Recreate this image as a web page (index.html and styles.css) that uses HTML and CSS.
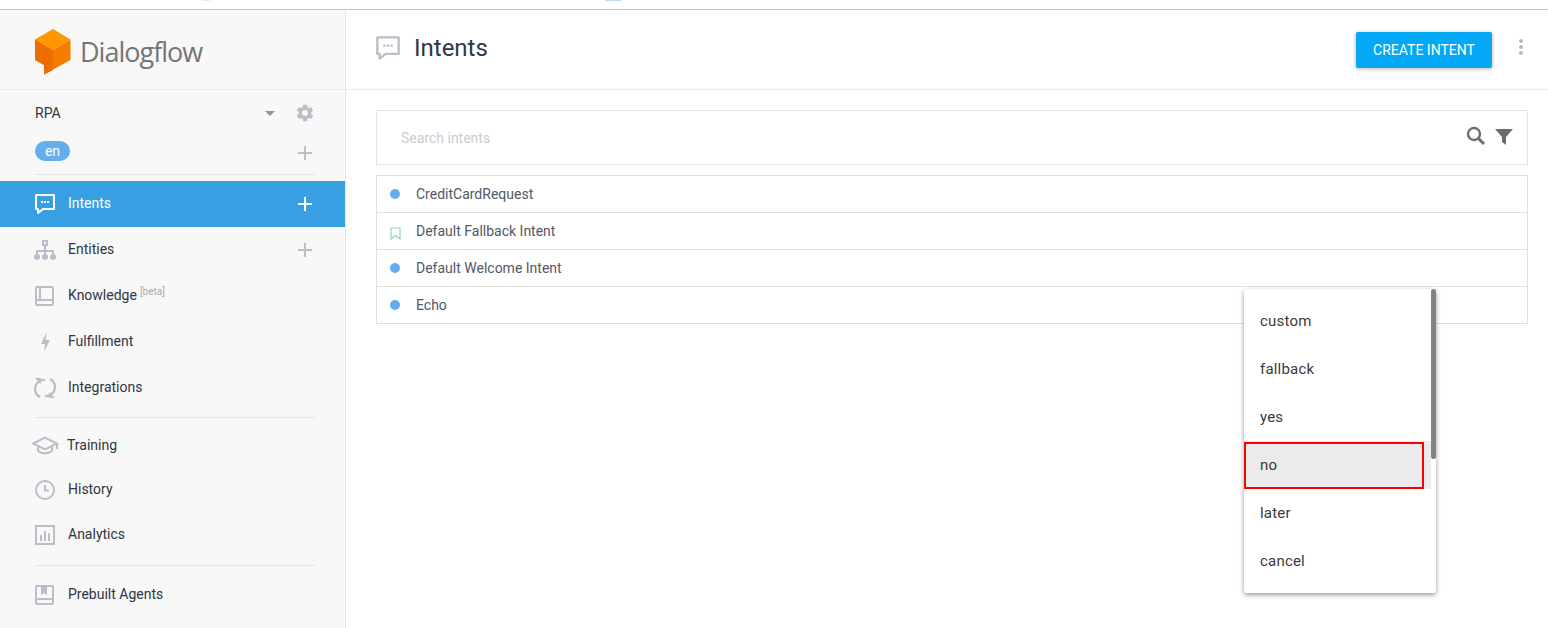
FILE: index.html
```html
<!DOCTYPE html>
<html lang="en">
<head>
<meta charset="utf-8">
<title>Dialogflow - Intents</title>
<link rel="stylesheet" href="styles.css">
</head>
<body>
<div class="topstrip"><span class="frag frag-a"></span><span class="frag frag-b"></span></div>
<div class="app">
  <aside class="sidebar">
    <div class="logo-row">
      <svg class="logo" width="36" height="46" viewBox="0 0 36 46">
        <path fill="#f57c00" d="M0 10.500 18 21 35.500 10.500V31L9 45.500V36L0 31z"/>
        <path fill="#ef6c00" d="M0 10.500 18 21V41L9 45.500V36L0 31z"/>
        <path fill="#ff9800" d="M18 0 35.500 10.500 18 21 0 10.500z"/>
      </svg>
      <span class="logo-text">Dialogflow</span>
    </div>
    <div class="agent-row">
      <span class="agent-name">RPA</span>
      <span class="caret"></span>
      <svg class="gear" width="20" height="20" viewBox="0 0 24 24"><path fill="#b9bec9" d="M19.400 13c.04-.33.060-.66.060-1s-.02-.67-.06-1l2.100-1.650a.5.500 0 0 0 .12-.64l-2-3.460a.5.500 0 0 0-.61-.22l-2.490 1a7.300 7.300 0 0 0-1.690-.98l-.38-2.650A.49.490 0 0 0 14 2h-4a.49.490 0 0 0-.49.42l-.38 2.650c-.61.25-1.170.59-1.690.98l-2.490-1a.5.500 0 0 0-.61.22l-2 3.460a.49.490 0 0 0 .12.64L4.570 11c-.04.33-.07.66-.07 1s.03.67.07 1l-2.110 1.650a.5.500 0 0 0-.12.64l2 3.460c.12.22.39.3.61.22l2.490-1c.52.4 1.080.73 1.690.98l.38 2.650c.03.24.24.42.49.42h4c.25 0 .46-.18.49-.42l.38-2.650c.61-.25 1.170-.59 1.690-.98l2.490 1c.22.08.49 0 .61-.22l2-3.460a.5.500 0 0 0-.12-.64zM12 15.500a3.500 3.500 0 1 1 0-7 3.500 3.500 0 0 1 0 7z"/></svg>
    </div>
    <div class="lang-row">
      <span class="lang-pill">en</span>
      <svg class="plus" width="14" height="14" viewBox="0 0 14 14"><path fill="#b9bec9" d="M6 0h2v6h6v2H8v6H6V8H0V6h6z"/></svg>
    </div>
    <div class="rule rule-lang"></div>
    <nav class="nav">
      <a class="nav-item active">
        <svg class="nav-icon" width="22" height="22" viewBox="0 0 22 22"><path fill="none" stroke="#fff" stroke-width="2" stroke-linejoin="round" d="M2 2h18v14H9l-5 4v-4H2z"/><path fill="#fff" d="M7 8h2v2H7zM10 8h2v2h-2zM13 8h2v2h-2z"/></svg>
        <span class="nav-label">Intents</span>
        <svg class="plus" width="14" height="14" viewBox="0 0 14 14"><path fill="#fff" d="M6 0h2v6h6v2H8v6H6V8H0V6h6z"/></svg>
      </a>
      <a class="nav-item">
        <svg class="nav-icon" width="22" height="22" viewBox="0 0 22 22"><g fill="#b9bec9"><path d="M8 1h6v6H8zm2 2v2h2V3z" fill-rule="evenodd"/><path d="M10 7h2v4h8v4h-2v-2h-6v2h-2v-2H4v2H2v-4h8z"/><circle cx="3" cy="18" r="3"/><circle cx="11" cy="18" r="3"/><circle cx="19" cy="18" r="3"/></g></svg>
        <span class="nav-label">Entities</span>
        <svg class="plus" width="14" height="14" viewBox="0 0 14 14"><path fill="#b9bec9" d="M6 0h2v6h6v2H8v6H6V8H0V6h6z"/></svg>
      </a>
      <a class="nav-item">
        <svg class="nav-icon" width="22" height="22" viewBox="0 0 22 22"><g fill="none" stroke="#b9bec9" stroke-width="2"><rect x="2" y="2" width="17" height="18" rx="1"/><path d="M6 2v13M2 15h17"/></g></svg>
        <span class="nav-label">Knowledge<sup class="beta">[beta]</sup></span>
      </a>
      <a class="nav-item">
        <svg class="nav-icon" width="22" height="22" viewBox="0 0 22 22"><path fill="#b9bec9" d="M12.500 1 7 13h4l-1 8 6-12h-4.500z"/></svg>
        <span class="nav-label">Fulfillment</span>
      </a>
      <a class="nav-item">
        <svg class="nav-icon" width="22" height="22" viewBox="0 0 22 22"><g fill="none" stroke="#b9bec9" stroke-width="2.400"><path d="M6 20A9 9 0 0 1 5 4.500C7 3 9 2.700 11 2.900"/><path d="M16 2A9 9 0 0 1 17 17.500C15 19 13 19.300 11 19.100"/></g><path fill="#b9bec9" d="M1 1h6v6zM21 21h-6v-6z"/></svg>
        <span class="nav-label">Integrations</span>
      </a>
    </nav>
    <div class="rule rule-a"></div>
    <nav class="nav">
      <a class="nav-item short">
        <svg class="nav-icon cap" width="28" height="20" viewBox="0 0 28 20"><g fill="none" stroke="#b9bec9" stroke-width="2"><path d="M14 1.500 2 7.500l12 6 12-6zM26 7.500V13"/><path d="M7 10.500v4c2 3.500 12 3.500 14 0v-4"/></g></svg>
        <span class="nav-label">Training</span>
      </a>
      <a class="nav-item short">
        <svg class="nav-icon" width="22" height="22" viewBox="0 0 22 22"><g fill="none" stroke="#b9bec9" stroke-width="2"><circle cx="11" cy="11" r="9"/><path d="M11 6v5.500h4"/></g></svg>
        <span class="nav-label">History</span>
      </a>
      <a class="nav-item">
        <svg class="nav-icon" width="22" height="22" viewBox="0 0 22 22"><path fill="none" stroke="#b9bec9" stroke-width="2" d="M2 2h18v18H2z"/><path fill="#b9bec9" d="M6 11h2v6H6zM10 7h2v10h-2zM14 9h2v8h-2z"/></svg>
        <span class="nav-label">Analytics</span>
      </a>
    </nav>
    <div class="rule rule-b"></div>
    <nav class="nav">
      <a class="nav-item">
        <svg class="nav-icon" width="22" height="22" viewBox="0 0 22 22"><g fill="none" stroke="#b9bec9" stroke-width="2"><rect x="2" y="2" width="17" height="18" rx="1"/><path d="M2 15h17"/></g><path fill="#b9bec9" d="M7 2h6v9l-3-2-3 2z"/></svg>
        <span class="nav-label">Prebuilt Agents</span>
      </a>
    </nav>
  </aside>
  <main class="main">
    <header class="page-head">
      <svg class="head-icon" width="26" height="26" viewBox="0 0 22 22"><path fill="none" stroke="#b9bec9" stroke-width="2" stroke-linejoin="round" d="M2 2h18v14H9l-5 4v-4H2z"/><path fill="#b9bec9" d="M7 8h2v2H7zM10 8h2v2h-2zM13 8h2v2h-2z"/></svg>
      <h1 class="page-title">Intents</h1>
      <button class="create-btn">CREATE INTENT</button>
      <span class="kebab"><i></i><i></i><i></i></span>
    </header>
    <section class="content">
      <div class="search-box">
        <span class="search-hint">Search intents</span>
        <svg class="search-icon" width="20" height="20" viewBox="0 0 20 20"><circle cx="8" cy="8" r="6" fill="none" stroke="#6d6d6d" stroke-width="2.400"/><path d="M12.500 12.500 18 18" stroke="#6d6d6d" stroke-width="3"/></svg>
        <svg class="filter-icon" width="18" height="18" viewBox="0 0 18 18"><path fill="#6d6d6d" d="M0 1h18l-7 8v8l-4-3V9z"/></svg>
      </div>
      <ul class="intent-list">
        <li class="intent"><span class="dot"></span><span class="intent-name">CreditCardRequest</span></li>
        <li class="intent"><svg class="bookmark" width="11" height="13" viewBox="0 0 11 13"><path fill="none" stroke="#86dbc1" stroke-width="1.200" d="M1 1h9v11L5.500 8.500 1 12z"/></svg><span class="intent-name">Default Fallback Intent</span></li>
        <li class="intent"><span class="dot"></span><span class="intent-name">Default Welcome Intent</span></li>
        <li class="intent"><span class="dot"></span><span class="intent-name">Echo</span></li>
      </ul>
    </section>
  </main>
</div>
<div class="menu">
  <ul class="menu-list">
    <li class="menu-item">custom</li>
    <li class="menu-item">fallback</li>
    <li class="menu-item">yes</li>
    <li class="menu-item hover">no<span class="red-box"></span></li>
    <li class="menu-item">later</li>
    <li class="menu-item">cancel</li>
  </ul>
  <span class="menu-thumb"></span>
</div>
</body>
</html>
```
FILE: styles.css
```css
* { box-sizing: border-box; }
html, body { height: 100%; }
body {
  margin: 0;
  height: 628px;
  overflow: hidden;
  background: #fff;
  font-family: Roboto, "Liberation Sans", sans-serif;
  color: #2f3645;
  display: flex;
  flex-direction: column;
}
.topstrip {
  position: relative;
  height: 10px;
  flex: none;
  border-bottom: 1px solid #c4c4c4;
}
.frag { position: absolute; top: 0; height: 1px; }
.frag-a { left: 202px; width: 8px; background: #e8e8e8; }
.frag-b { left: 605px; width: 16px; background: #bcdcf3; }
.app { flex: 1; display: flex; min-height: 0; }

.sidebar {
  width: 346px;
  flex: none;
  background: #f8f8f8;
  border-right: 1px solid #e6e6e6;
  display: flex;
  flex-direction: column;
}
.logo-row {
  height: 80px;
  flex: none;
  display: flex;
  align-items: center;
  padding: 4px 0 0 35px;
  border-bottom: 1px solid #e9e9e9;
}
.logo { flex: none; }
.logo-text {
  margin-left: 9px;
  font-family: "Open Sans", Roboto, sans-serif;
  font-size: 27px;
  letter-spacing: -1px;
  line-height: 1;
  color: #757575;
}
.agent-row {
  height: 46px;
  flex: none;
  display: flex;
  align-items: center;
  padding: 0 30px 0 35px;
  font-size: 14px;
}
.agent-name { flex: 1; }
.caret {
  width: 0;
  height: 0;
  border: 5px solid transparent;
  border-top-color: #8d93a3;
  border-bottom-width: 0;
  margin-right: 20px;
}
.gear { flex: none; }
.lang-row {
  height: 28px;
  flex: none;
  display: flex;
  align-items: center;
  justify-content: space-between;
  padding: 0 33px 0 35px;
  margin-top: 1px;
}
.lang-pill {
  width: 35px;
  height: 20px;
  border-radius: 10px;
  background: #64aeee;
  color: #fff;
  font-size: 14px;
  line-height: 20px;
  text-align: center;
}
.lang-row .plus { margin-top: 4px; }
.rule { height: 1px; background: #e4e4e4; margin-left: 35px; margin-right: 30px; flex: none; }
.rule-lang { margin-top: 9px; margin-bottom: 6px; }
.rule-a { margin-top: 6px; margin-bottom: 6px; }
.rule-b { margin-top: 7px; margin-bottom: 6px; }

.nav { display: flex; flex-direction: column; }
.nav-item {
  height: 46px;
  display: flex;
  align-items: center;
  padding: 0 33px 0 35px;
  font-size: 14px;
  color: #2f3645;
}
.nav-item.short { height: 44px; }
.nav-item.active { background: #389fe2; color: #fff; }
.nav-icon { flex: none; margin-right: 12px; margin-left: -1px; }
.nav-icon.cap { margin-left: -4px; margin-right: 8px; }
.nav-label { flex: 1; padding-bottom: 2px; }
.beta { font-size: 10px; color: #a5a9b3; margin-left: 3px; vertical-align: 5px; line-height: 0; }

.main { flex: 1; min-width: 0; display: flex; flex-direction: column; }
.page-head {
  height: 80px;
  flex: none;
  display: flex;
  align-items: center;
  padding: 0 25px 0 29px;
  border-bottom: 1px solid #eaeaea;
}
.head-icon { flex: none; margin-bottom: 4px; }
.page-title {
  margin: 0 0 0 13px;
  flex: 1;
  padding-bottom: 3px;
  font-size: 24px;
  font-weight: 400;
  color: #2f3645;
}
.create-btn {
  width: 136px;
  height: 36px;
  border: 0;
  border-radius: 2px;
  background: #03a9f4;
  color: #fff;
  font-family: inherit;
  font-size: 14px;
  box-shadow: 0 1px 4px rgba(0, 0, 0, .3);
  padding: 0;
}
.kebab {
  display: flex;
  flex-direction: column;
  gap: 2px;
  margin-left: 27px;
  margin-bottom: 5px;
}
.kebab i { width: 4px; height: 4px; border-radius: 50%; background: #b4b8c2; display: block; }

.content { padding: 20px 20px 0 30px; }
.search-box {
  height: 55px;
  border: 1px solid #e3e3e3;
  display: flex;
  align-items: center;
  padding: 0 14px 0 24px;
}
.search-hint { flex: 1; font-size: 14px; color: #c9ccd1; }
.search-icon { margin-right: 9px; margin-top: -3px; }
.filter-icon { margin-top: -1px; }
.intent-list {
  list-style: none;
  margin: 10px 0 0;
  padding: 0;
  border: 1px solid #e0e0e0;
  border-bottom: 0;
}
.intent {
  height: 37px;
  display: flex;
  align-items: center;
  padding: 0 0 0 13px;
  border-bottom: 1px solid #e0e0e0;
  font-size: 14px;
  color: #525866;
}
.dot { width: 10px; height: 10px; border-radius: 50%; background: #64aeee; flex: none; margin-right: 16px; }
.bookmark { flex: none; margin-right: 15px; margin-top: 4px; }

.menu {
  position: absolute;
  left: 1244px;
  top: 289px;
  width: 192px;
  height: 304px;
  background: #fff;
  border-radius: 2px;
  box-shadow: 0 2px 5px rgba(0, 0, 0, .4);
  padding: 8px 5px 0 0;
}
.menu-list { list-style: none; margin: 0; padding: 0; }
.menu-item {
  position: relative;
  height: 48px;
  line-height: 48px;
  padding-left: 16px;
  font-size: 15px;
  letter-spacing: .2px;
  color: #3a3a3a;
}
.menu-item.hover { background: #ebebeb; }
.red-box {
  position: absolute;
  left: 0;
  top: 1px;
  width: 180px;
  height: 47px;
  border: 2px solid #f00;
}
.menu-thumb {
  position: absolute;
  right: 0;
  top: 0;
  width: 5px;
  height: 170px;
  border-radius: 3px;
  background: #828282;
}
```
